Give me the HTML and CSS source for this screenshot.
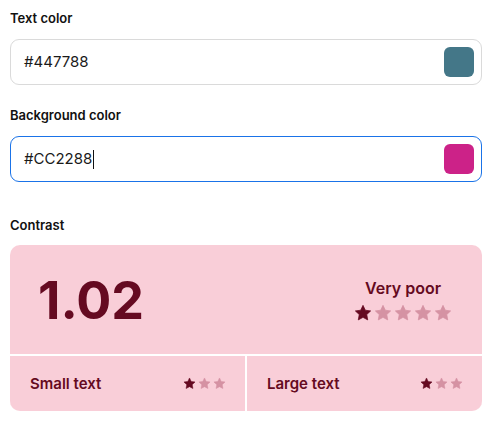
FILE: index.html
```html
<!DOCTYPE html>
<html lang="en">
<head>
<meta charset="utf-8">
<title>Contrast checker</title>
<link rel="stylesheet" href="styles.css">
</head>
<body>
<svg width="0" height="0" class="defs" aria-hidden="true">
  <defs>
    <path id="star" d="M12 1.8l3.1 6.5 7.1.9-5.2 4.9 1.3 7.1L12 17.8l-6.3 3.4 1.3-7.1L1.8 9.2l7.1-.9z" stroke-linejoin="round"/>
  </defs>
</svg>
<main class="page">
  <section class="field">
    <div class="label">Text color</div>
    <div class="input">
      <span class="value">#447788</span>
      <span class="swatch" style="background:#447788"></span>
    </div>
  </section>
  <section class="field field-second">
    <div class="label">Background color</div>
    <div class="input input-focus">
      <span class="value">#CC2288<span class="caret"></span></span>
      <span class="swatch" style="background:#CC2288"></span>
    </div>
  </section>
  <section class="field field-contrast">
    <div class="label">Contrast</div>
    <div class="card">
      <div class="card-top">
        <div class="ratio">1.02</div>
        <div class="rating">
          <div class="rating-text">Very poor</div>
          <div class="stars stars-lg">
            <svg class="on" viewBox="0 0 24 24"><use href="#star"/></svg>
            <svg class="off" viewBox="0 0 24 24"><use href="#star"/></svg>
            <svg class="off" viewBox="0 0 24 24"><use href="#star"/></svg>
            <svg class="off" viewBox="0 0 24 24"><use href="#star"/></svg>
            <svg class="off" viewBox="0 0 24 24"><use href="#star"/></svg>
          </div>
        </div>
      </div>
      <div class="card-bottom">
        <div class="cell">
          <span class="cell-label">Small text</span>
          <div class="stars stars-sm">
            <svg class="on" viewBox="0 0 24 24"><use href="#star"/></svg>
            <svg class="off" viewBox="0 0 24 24"><use href="#star"/></svg>
            <svg class="off" viewBox="0 0 24 24"><use href="#star"/></svg>
          </div>
        </div>
        <div class="cell">
          <span class="cell-label">Large text</span>
          <div class="stars stars-sm">
            <svg class="on" viewBox="0 0 24 24"><use href="#star"/></svg>
            <svg class="off" viewBox="0 0 24 24"><use href="#star"/></svg>
            <svg class="off" viewBox="0 0 24 24"><use href="#star"/></svg>
          </div>
        </div>
      </div>
    </div>
  </section>
</main>
</body>
</html>
```

FILE: styles.css
```css
* { box-sizing: border-box; }
html, body { margin: 0; padding: 0; background: #fff; }
body {
  font-family: Inter, "Noto Sans", "Liberation Sans", sans-serif;
  color: #111;
}
.defs { position: absolute; width: 0; height: 0; overflow: hidden; }
.page {
  padding: 8px 11px 0 10px;
  display: flex;
  flex-direction: column;
}
.field { display: flex; flex-direction: column; gap: 11px; }
.field-second { margin-top: 20px; }
.field-contrast { margin-top: 33px; gap: 10px; }
.label {
  font-size: 13px;
  font-weight: 600;
  line-height: 20px;
  color: #111;
}
.input {
  height: 46px;
  border: 1px solid #dadada;
  border-radius: 9px;
  display: flex;
  align-items: center;
  justify-content: space-between;
  padding: 0 7px 0 13px;
}
.input-focus { border-color: #1a73e8; }
.value {
  font-size: 15px;
  line-height: 20px;
  color: #1a1a1a;
  display: flex;
  align-items: center;
}
.caret {
  display: inline-block;
  width: 1px;
  height: 19px;
  background: #111;
  margin-left: 1px;
}
.swatch {
  width: 30px;
  height: 30px;
  border-radius: 6px;
}
.card {
  background: #f9ced8;
  border-radius: 10px;
  overflow: hidden;
  color: #650a21;
}
.card-top {
  height: 109px;
  display: flex;
  align-items: center;
  justify-content: space-between;
  padding: 0 30px 0 28px;
}
.ratio {
  font-size: 52px;
  font-weight: 700;
  line-height: 1;
  margin-top: 2px;
}
.rating {
  display: flex;
  flex-direction: column;
  align-items: center;
  gap: 6px;
}
.rating-text {
  font-size: 16px;
  font-weight: 600;
  line-height: 20px;
}
.stars { display: flex; }
.stars svg { display: block; }
.stars .on { fill: #650a21; stroke: #650a21; }
.stars .off { fill: #d592a3; stroke: #d592a3; }
.stars-lg { gap: 2px; }
.stars-lg svg { width: 18px; height: 18px; }
.stars-sm { gap: 2px; }
.stars-sm svg { width: 13px; height: 13px; }
.card-bottom {
  border-top: 2px solid #fff;
  height: 57px;
  display: grid;
  grid-template-columns: 1fr 1fr;
  gap: 2px;
  background: #fff;
}
.cell {
  background: #f9ced8;
  display: flex;
  align-items: center;
  justify-content: space-between;
  padding: 0 19px 0 20px;
}
.cell-label {
  font-size: 15px;
  font-weight: 600;
  line-height: 20px;
}
```
